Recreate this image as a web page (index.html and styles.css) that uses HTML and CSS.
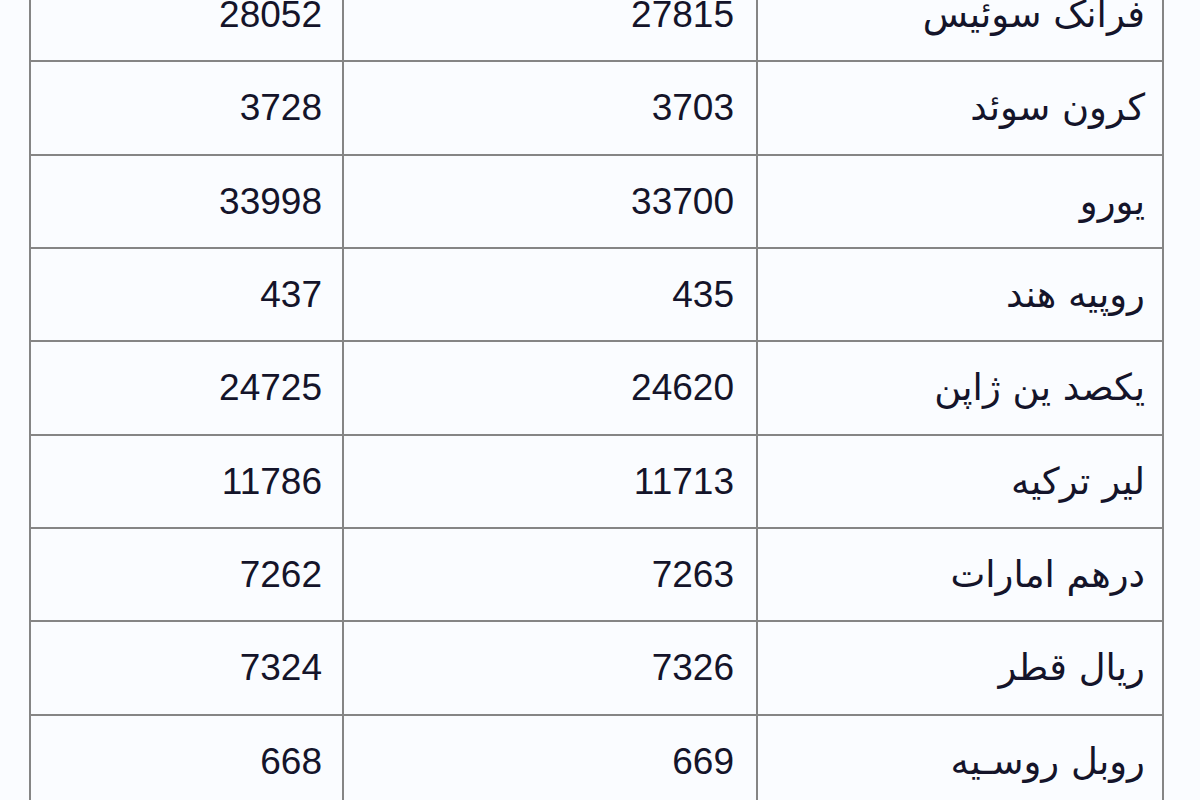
FILE: index.html
```html
<!DOCTYPE html>
<html lang="fa">
<head>
<meta charset="utf-8">
<title>نرخ ارز</title>
<link rel="stylesheet" href="styles.css">
</head>
<body>
<table class="rates" dir="rtl">
  <colgroup>
    <col class="c-name">
    <col class="c-buy">
    <col class="c-sell">
  </colgroup>
  <tbody>
    <tr><td class="name">فرانک سوئیس</td><td class="num buy">27815</td><td class="num sell">28052</td></tr>
    <tr><td class="name">کرون سوئد</td><td class="num buy">3703</td><td class="num sell">3728</td></tr>
    <tr><td class="name">یورو</td><td class="num buy">33700</td><td class="num sell">33998</td></tr>
    <tr><td class="name">روپیه هند</td><td class="num buy">435</td><td class="num sell">437</td></tr>
    <tr><td class="name">یکصد ین ژاپن</td><td class="num buy">24620</td><td class="num sell">24725</td></tr>
    <tr><td class="name">لیر ترکیه</td><td class="num buy">11713</td><td class="num sell">11786</td></tr>
    <tr><td class="name">درهم امارات</td><td class="num buy">7263</td><td class="num sell">7262</td></tr>
    <tr><td class="name">ریال قطر</td><td class="num buy">7326</td><td class="num sell">7324</td></tr>
    <tr><td class="name">روبل روسـیه</td><td class="num buy">669</td><td class="num sell">668</td></tr>
  </tbody>
</table>
</body>
</html>
```
FILE: styles.css
```css
html, body {
  margin: 0;
  padding: 0;
  background: #fafcff;
  overflow: hidden;
}
.rates {
  border-collapse: collapse;
  margin: -33px 0 0 29px;
  width: 1133px;
  table-layout: fixed;
  color: #14142a;
}
.c-name { width: 406px; }
.c-buy { width: 414px; }
.c-sell { width: 313px; }
.rates td {
  border: 2px solid #858585;
  height: 91.33px;
  padding: 0 19px 0 0;
  text-align: right;
  vertical-align: middle;
  line-height: 1;
}
.num {
  font-family: "Liberation Sans", Arial, sans-serif;
  font-size: 37px;
}
.rates td.buy { padding-right: 22px; }
.rates td.sell { padding-right: 20px; }
.name {
  font-family: "DejaVu Sans", sans-serif;
  font-size: 37px;
}
.rates td.name { padding-right: 17px; }
```
